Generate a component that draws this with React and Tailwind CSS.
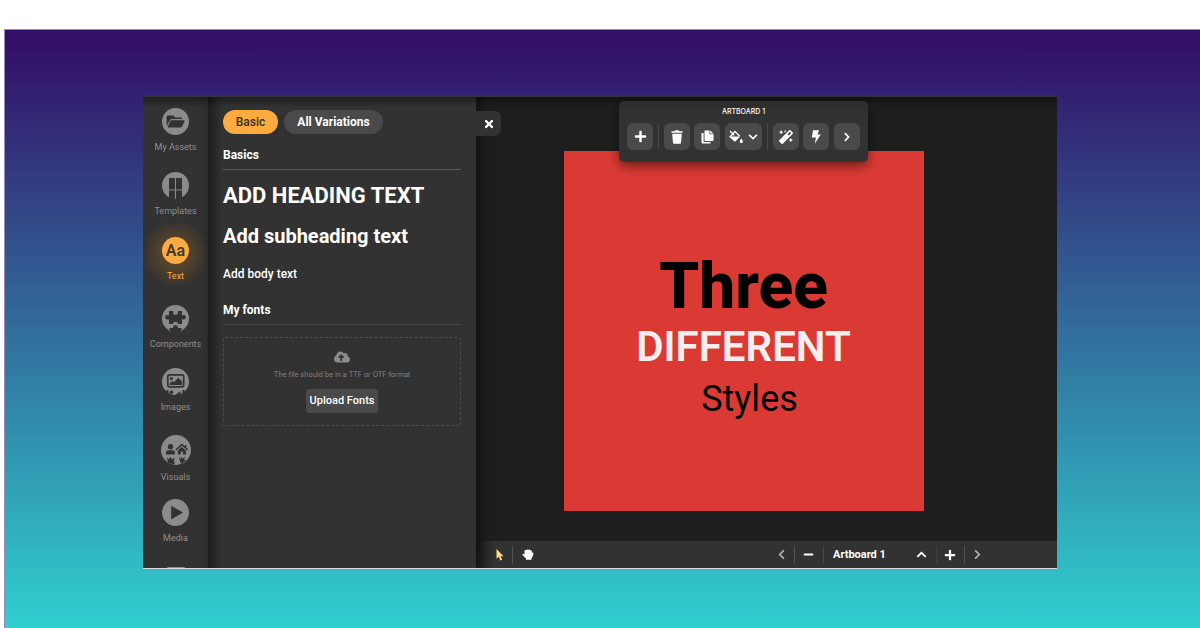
import React from 'react';
import { FaPlus, FaMinus, FaTimes, FaChevronDown, FaChevronUp, FaChevronLeft, FaChevronRight, FaCloudUploadAlt, FaMagic } from 'react-icons/fa';

// Sidebar icons, discs with a dark glyph
const AssetsIcon = () => (
  <svg width="27" height="27" viewBox="0 0 27 27" fill="#323232">
    <circle cx="13.5" cy="13.5" r="13.5" fill="#8b8b8b" />
    <path d="M4.600 18.200V9Q4.600 7.600 6 7.600H11.500L13.300 9.400H19Q20.400 9.400 20.400 11H9.600Q8.500 11 8 12Z" />
    <path d="M9.400 12.200H22Q23.100 12.200 22.500 13.300L20.200 18.300Q19.700 19.400 18.500 19.400H6.200Q5.400 19.400 5.900 18.500L8.200 13.200Q8.600 12.200 9.400 12.200Z" />
  </svg>
);

const TemplatesIcon = () => (
  <svg width="27" height="27" viewBox="0 0 27 27" fill="#323232">
    <circle cx="13.5" cy="13.5" r="13.5" fill="#8b8b8b" />
    <path d="M7 6h6v11.500H7zM14 6h6v11.500h-6zM7 18.500h6V27H7zM14 18.500h6V27h-6z" />
  </svg>
);

const TextIcon = () => (
  <span className="w-[27px] h-[27px] rounded-full bg-[#ffab40] flex items-center justify-center text-[16px] leading-none font-semibold text-[#40372b]">
    Aa
  </span>
);

const ComponentsIcon = () => (
  <svg width="27" height="27" viewBox="0 0 27 27">
    <circle cx="13.5" cy="13.5" r="13.5" fill="#8b8b8b" />
    <path
      d="M7 6H11.200V7.500Q11 9.800 13.500 9.800T15.800 7.500V6H20V10.500Q23.800 9 23.800 12.300T20 14.200V19H15.900Q16.300 21.200 18.500 22.500L20.500 27H6.500L8.500 22.500Q10.700 21.200 11.100 19H7V14.200Q3.200 15.600 3.200 12.300T7 10.500Z"
      fill="#323232"
    />
    <path d="M7 19H11.300Q10.500 16.800 13.500 16.800T15.700 19H20V27H7Z" fill="#8b8b8b" />
    <path d="M7.500 27V23H11.300Q10.400 20.200 13.500 20.200T15.700 23H19.500V27Z" fill="#323232" />
  </svg>
);

const ImagesIcon = () => (
  <svg width="27" height="27" viewBox="0 0 27 27">
    <circle cx="13.5" cy="13.5" r="13.5" fill="#8b8b8b" />
    <rect x="5.800" y="6.800" width="15.900" height="12" rx="1.500" fill="none" stroke="#323232" strokeWidth="1.700" />
    <circle cx="9.400" cy="10.400" r="1.500" fill="#323232" />
    <path d="M7.500 17V15.500L10.500 13L12 14.200L16.300 9.800L20 13.500V17ZM13 27L18.500 23.200V27Z" fill="#323232" />
    <circle cx="9.400" cy="24.200" r="1.800" fill="#323232" />
    <path d="M4.500 22H6.500V27H4.500ZM20.500 22H22.500V27H20.500Z" fill="#323232" />
  </svg>
);

const VisualsIcon = () => (
  <svg width="30" height="30" viewBox="0 0 30 30" fill="#323232">
    <circle cx="15" cy="15" r="15" fill="#8b8b8b" />
    <circle cx="9.500" cy="11.800" r="2.700" />
    <path d="M5 19.500V17.500Q5 15.300 7.200 15.300H11.800Q14 15.300 14 17.500V19.500Z" />
    <path d="M14.800 15L20.800 9.600L26.800 15M24.500 10V12.500" fill="none" stroke="#323232" strokeWidth="1.500" />
    <path d="M16.800 15.500L20.800 12L24.800 15.500V19.500H22V16.800H19.700V19.500H16.800Z" />
    <path d="M6 22L8 24.500L9.500 21.500L11 24.500L13.500 22.500L13 26L14 29.500L7 28Z" />
    <path d="M17.500 22L20 24L20 21.500L21.500 23.500L24.500 22L23 24.500L25 25.500L20 29L19 26Z" />
  </svg>
);

const MediaIcon = () => (
  <svg width="27" height="27" viewBox="0 0 27 27">
    <circle cx="13.5" cy="13.5" r="13.5" fill="#8b8b8b" />
    <path d="M9.200 6.800L21 13.500L9.200 20.500Z" fill="#323232" />
  </svg>
);

const LayersIcon = () => (
  <svg width="18" height="18" viewBox="0 0 18 18">
    <rect width="18" height="18" rx="1" fill="#8b8b8b" />
  </svg>
);

// Toolbar icons
const TrashIcon = () => (
  <svg width="12" height="14" viewBox="0 0 12 14" fill="currentColor">
    <path d="M0.500 1.200H3.800L4.500 0.300H7.500L8.200 1.200H11.500V2.700H0.500ZM1.200 3.700H10.800L10 13Q9.900 13.800 9.100 13.800H2.900Q2.100 13.800 2 13Z" />
  </svg>
);

const CopyIcon = () => (
  <svg width="13" height="14" viewBox="0 0 13 14" fill="currentColor">
    <path d="M4 0.500H8.500V4.200H12.500V10.300Q12.500 11 11.800 11H4.200Q3.500 11 3.500 10.300V1Q3.500 0.500 4 0.500Z" />
    <path d="M9.300 0.500L12.500 3.500H9.300ZM0.500 3H2.600V12H9.500V13.500H1.300Q0.500 13.500 0.500 12.800Z" />
  </svg>
);

const BucketIcon = () => (
  <svg width="14" height="13" viewBox="0 0 14 13">
    <path d="M1 1L5.200 5.200M0.900 7L6 1.500L10.800 6.300" fill="none" stroke="currentColor" strokeWidth="1.300" />
    <path d="M0.300 6.400H11.200L6.900 11Q5.900 12 4.900 11L0.900 7.500ZM12.200 8.500Q13.900 10.700 13.900 11.500A1.600 1.500 0 0 1 10.700 11.500Q10.700 10.700 12.200 8.500Z" fill="currentColor" />
  </svg>
);

const BoltIcon = () => (
  <svg width="10" height="14" viewBox="0 0 10 14" fill="currentColor">
    <path d="M2 0.300H8L6.500 4.500H9.800L3.800 13.700L4.900 7.500H0.800Z" />
  </svg>
);

const CursorIcon = () => (
  <svg width="8" height="12" viewBox="0 0 8 12" fill="#ffdb80">
    <path d="M0.500 0V9.800L2.800 7.800L4.400 11.500L6.200 10.700L4.600 7.200H7.500Z" />
  </svg>
);

const HandIcon = () => (
  <svg width="12" height="11" viewBox="0 0 12 11" fill="currentColor">
    <path d="M2.500 2Q2.500 0.900 3.500 1.100L4.300 1.600Q4.600 0.300 5.600 0.500L6.200 1Q7 0 7.900 0.600L8.300 1.500Q9.500 0.900 9.800 2V3.500Q11.500 3 11.500 4.500Q11.300 7.500 9.500 9.500V10.800H4V9.500L0.500 6Q0.100 4.800 1.300 4.700L2.500 5.400Z" />
  </svg>
);

const menuItems = [
  { label: 'My Assets', Icon: AssetsIcon, row: 'pt-[13px] h-[64px]' },
  { label: 'Templates', Icon: TemplatesIcon, row: 'pt-[13px] h-[64px]' },
  { label: 'Text', Icon: TextIcon, row: 'pt-[14px] h-[68px]', active: true },
  { label: 'Components', Icon: ComponentsIcon, row: 'pt-[14px] h-[64px]' },
  { label: 'Images', Icon: ImagesIcon, row: 'pt-[13px] h-[66px]' },
  { label: 'Visuals', Icon: VisualsIcon, row: 'pt-[14px] h-[66px]' },
  { label: 'Media', Icon: MediaIcon, row: 'pt-[12px] h-[66px]' },
];

function Sidebar() {
  return (
    <nav className="w-[65px] shrink-0 overflow-hidden bg-[#323232]">
      {menuItems.map(({ label, Icon, row, active }) => (
        <a
          key={label}
          href="#"
          className={`${row} flex flex-col items-center gap-[5px] text-[9px] leading-[14px] ${
            active
              ? 'text-[#ffab40] bg-[radial-gradient(circle_at_50%_45%,#66502f_0px,#4b3e2c_20px,#323232_34px)]'
              : 'text-[#8f8f8f]'
          }`}
        >
          <Icon />
          <span>{label}</span>
        </a>
      ))}
      <a href="#" aria-label="Layers" className="pt-[14px] flex justify-center">
        <LayersIcon />
      </a>
    </nav>
  );
}

function TextPanel() {
  return (
    <section className="relative z-10 w-[268px] shrink-0 bg-[#323232] bg-[linear-gradient(to_right,#1d1d1d,#323232_14px)] px-[15px] pt-[15px] text-white shadow-[4px_0_12px_rgba(0,0,0,0.5)]">
      <div className="flex gap-[6px] text-[12px] leading-[24px]">
        <button className="w-[55px] rounded-full bg-[#ffab40] font-medium text-[#3a2c18]">Basic</button>
        <button className="w-[99px] rounded-full bg-[#4a4a4a] font-bold">All Variations</button>
      </div>

      <h2 className="mt-[13px] pb-[6px] border-b border-[#5a5a5a] text-[12px] leading-[16px] font-bold">Basics</h2>
      <button className="block mt-[12px] text-[22px] leading-[28px] font-bold whitespace-nowrap">ADD HEADING TEXT</button>
      <button className="block mt-[14px] text-[20px] leading-[24px] font-bold whitespace-nowrap">Add subheading text</button>
      <button className="block mt-[18px] text-[12px] leading-[16px] font-medium">Add body text</button>

      <h2 className="mt-[20px] pb-[6px] border-b border-[#464646] text-[12px] leading-[16px] font-bold">My fonts</h2>
      <div className="mt-[12px] h-[89px] flex flex-col items-center rounded-[2px] border border-dashed border-[#4d4d4d] pt-[11px]">
        <FaCloudUploadAlt size={16} color="#8b8b8b" />
        <p className="mt-[4px] font-['Inter',sans-serif] text-[7px] leading-[12px] text-[#858585]">The file should be in a TTF or OTF format</p>
        <button className="mt-[8px] w-[72px] rounded-[3px] bg-[#4a4a4a] text-[11px] leading-[24px] font-medium">Upload Fonts</button>
      </div>

      {/* Close tab sticking out of the panel */}
      <button
        aria-label="Close"
        className="absolute left-full top-[16px] w-[25px] h-[25px] flex items-center justify-center rounded-r-[6px] bg-[#323232]"
      >
        <FaTimes size={12} />
      </button>
    </section>
  );
}

function ToolButton({ label, wide, children }) {
  return (
    <button
      aria-label={label}
      className={`${wide ? 'w-[37px]' : 'w-[26px]'} h-[27px] shrink-0 flex items-center justify-center gap-[5px] rounded-[6px] bg-[#4a4a4a]`}
    >
      {children}
    </button>
  );
}

function Toolbar() {
  return (
    <div className="absolute z-30 top-[6px] left-[143px] w-[249px] h-[61px] rounded-[5px] bg-[#323232] bg-[linear-gradient(#2c2c2c,#323232_16px)] px-[8px] pt-[5px] text-white shadow-[0_4px_12px_rgba(0,0,0,0.5)]">
      <p className="text-center font-['Inter',sans-serif] text-[7px] leading-[12px] font-medium">ARTBOARD 1</p>
      <div className="mt-[5px] flex items-center justify-between">
        <ToolButton label="Add"><FaPlus size={13} /></ToolButton>
        <span className="w-px h-[26px] shrink-0 bg-[#484848]" />
        <ToolButton label="Delete"><TrashIcon /></ToolButton>
        <ToolButton label="Duplicate"><CopyIcon /></ToolButton>
        <ToolButton label="Fill" wide>
          <BucketIcon />
          <FaChevronDown size={10} />
        </ToolButton>
        <span className="w-px h-[26px] shrink-0 bg-[#484848]" />
        <ToolButton label="Effects"><FaMagic size={14} /></ToolButton>
        <ToolButton label="Animate"><BoltIcon /></ToolButton>
        <ToolButton label="More"><FaChevronRight size={10} /></ToolButton>
      </div>
    </div>
  );
}

function BottomBar() {
  return (
    <footer className="h-[27px] shrink-0 flex items-center bg-[#323232] bg-[linear-gradient(to_right,#1d1d1d,#323232_18px)] pl-[20px] pr-[74px] text-white">
      <button aria-label="Select"><CursorIcon /></button>
      <span className="ml-[8px] w-px h-[18px] bg-[#505050]" />
      <button aria-label="Pan" className="ml-[9px]"><HandIcon /></button>

      <div className="ml-auto flex items-center">
        <button aria-label="Previous artboard" className="text-[#b0b0b0]"><FaChevronLeft size={11} /></button>
        <span className="ml-[7px] w-px h-[18px] bg-[#505050]" />
        <button aria-label="Remove artboard" className="ml-[8px]"><FaMinus size={11} /></button>
        <span className="ml-[9px] w-px h-[18px] bg-[#484848]" />
        <button className="ml-[9px] w-[94px] flex items-center justify-between text-[11px] leading-[16px] font-bold">
          Artboard 1
          <FaChevronUp size={11} />
        </button>
        <span className="ml-[9px] w-px h-[18px] bg-[#404040]" />
        <button aria-label="Add artboard" className="ml-[7px]"><FaPlus size={12} /></button>
        <span className="ml-[8px] w-px h-[18px] bg-[#505050]" />
        <button aria-label="Next artboard" className="ml-[7px] text-[#b0b0b0]"><FaChevronRight size={11} /></button>
      </div>
    </footer>
  );
}

function Canvas() {
  return (
    <main className="relative flex-1 min-w-0 flex flex-col bg-[#1e1e1e]">
      <Toolbar />
      <div className="flex-1 min-h-0 flex justify-center pt-[56px] pr-[46px]">
        <div className="w-[360px] h-[360px] shrink-0 bg-[#db3a34] pt-[104px] flex flex-col items-center">
          <p className="text-[64px] leading-[64px] font-extrabold text-black">Three</p>
          <p className="text-[42px] leading-[56px] font-semibold text-[#f5eeee]">DIFFERENT</p>
          <p className="pl-[12px] text-[36px] leading-[48px] text-black">Styles</p>
        </div>
      </div>
      <BottomBar />
    </main>
  );
}

export default function App() {
  return (
    <div className="h-screen flex flex-col bg-white pt-[29px] pl-[4px] font-['Roboto',sans-serif]">
      <div className="flex-1 min-h-0 border-l border-t border-[#9a8ab4] bg-[linear-gradient(#330f69_2%,#30cfd0)] pt-[65px] pb-[59px] pl-[138px] pr-[143px]">
        <div className="relative h-full flex overflow-hidden border-b border-[#dcdcdc]">
          <Sidebar />
          <TextPanel />
          <Canvas />
          {/* Shade along the top edge */}
          <div className="absolute z-20 inset-x-0 top-0 h-[12px] pointer-events-none border-t-2 border-[#333333] bg-[linear-gradient(rgba(0,0,0,0.4),rgba(0,0,0,0))]" />
        </div>
      </div>
    </div>
  );
}
